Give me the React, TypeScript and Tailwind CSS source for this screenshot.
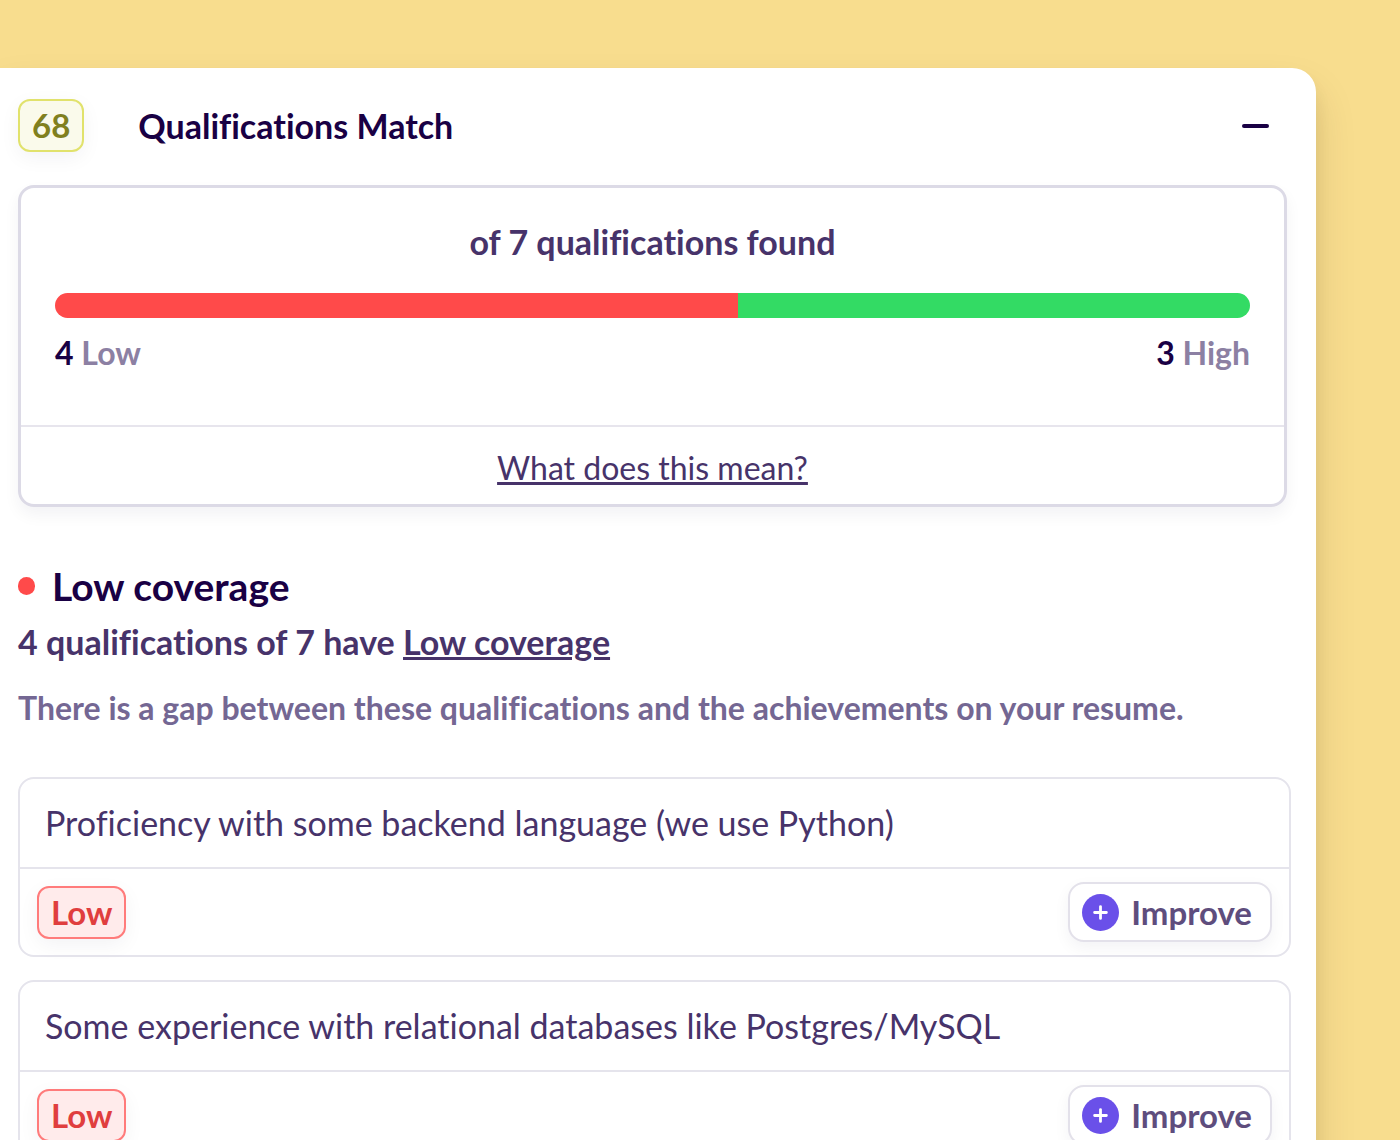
import React, { useState } from "react";

const qualifications = [
  { id: 1, title: "Proficiency with some backend language (we use Python)", level: "Low" },
  { id: 2, title: "Some experience with relational databases like Postgres/MySQL", level: "Low" },
];

const counts = { low: 4, high: 3 };
const total = counts.low + counts.high;

function PlusIcon() {
  return (
    <svg className="h-[37px] w-[37px]" viewBox="0 0 37 37" aria-hidden="true">
      <circle cx="18.5" cy="18.5" r="18.5" fill="#6a50e9" />
      <path d="M18.5 12.6v11.8M12.6 18.5h11.8" stroke="#fff" strokeWidth="2.8" strokeLinecap="round" />
    </svg>
  );
}

function CoverageSummary() {
  return (
    <div className="mr-1 rounded-2xl border-3 border-[#dcdae6] shadow-[0_8px_16px_rgba(25,0,68,0.05)]">
      <div className="px-[34px] pt-[30px] pb-12">
        <p className="text-center text-[34px] leading-12 font-bold text-[#47336a]">
          of {total} qualifications found
        </p>
        <div className="mt-[27px] flex h-[25px] overflow-hidden rounded-full">
          <div className="bg-[#ff4a4a]" style={{ width: `${(counts.low / total) * 100}%` }} />
          <div className="flex-1 bg-[#33db64]" />
        </div>
        <div className="mt-[11px] flex justify-between text-[32px] leading-12 font-bold text-[#8c80a3]">
          <p>
            <span className="text-[#190044]">{counts.low}</span> Low
          </p>
          <p>
            <span className="text-[#190044]">{counts.high}</span> High
          </p>
        </div>
      </div>
      <div className="border-t-2 border-[#e7e5ed] pt-[17px] pb-3 text-center text-[32px] leading-12 text-[#47336a]">
        <a href="#coverage" className="underline">
          What does this mean?
        </a>
      </div>
    </div>
  );
}

function QualificationCard({ title, level }: { title: string; level: string }) {
  return (
    <li className="rounded-2xl border-2 border-[#e5e4ec]">
      <h4 className="border-b-2 border-[#e5e4ec] px-[25px] py-5 text-[34px] leading-12 text-[#47336a]">{title}</h4>
      <div className="flex items-center justify-between px-[17px] py-[13px]">
        <span className="rounded-xl border-2 border-[#ff7b7b] bg-[#ffebeb] px-3 text-[33px] leading-[49px] font-bold text-[#e03e3e] shadow-[0_6px_20px_rgba(25,0,68,0.05)]">
          {level}
        </span>
        <button
          type="button"
          className="flex items-center gap-3 rounded-2xl border-2 border-[#e3e1ea] bg-white py-1 pr-[18px] pl-3 text-[33px] leading-12 font-bold text-[#5e4d7d] shadow-[0_6px_16px_rgba(25,0,68,0.05)]"
        >
          <PlusIcon />
          Improve
        </button>
      </div>
    </li>
  );
}

export default function App() {
  const [open, setOpen] = useState<boolean>(true);

  return (
    <div className="h-screen overflow-hidden bg-[#f8dd8e] pt-[68px] pr-[84px] font-['Lato',sans-serif] [font-variant-ligatures:none]">
      <main className="min-h-full rounded-tr-3xl bg-white pt-[31px] pr-[25px] pb-12 pl-[18px] shadow-[0_24px_40px_rgba(70,50,0,0.15),0_12px_16px_rgba(70,50,0,0.08)]">
        {/* Section header */}
        <header className="flex items-center">
          <span className="rounded-xl border-2 border-[#e1e26c] bg-[#fafaeb] px-3 text-[33px] leading-[49px] font-bold text-[#80801f] shadow-[0_6px_20px_rgba(25,0,68,0.05)]">
            68
          </span>
          <h2 className="ml-[54px] text-[34px] leading-12 font-bold text-[#190044]">Qualifications Match</h2>
          <button
            type="button"
            aria-label="Toggle section"
            aria-expanded={open}
            onClick={() => setOpen(!open)}
            className="mr-4 ml-auto flex h-12 w-10 items-center justify-center"
          >
            <span className="h-1 w-[27px] rounded-full bg-[#190044]" />
          </button>
        </header>

        {open && (
          <div className="mt-[33px]">
            <CoverageSummary />

            {/* Low coverage */}
            <section className="mt-[55px]">
              <h3 className="flex items-center gap-[17px] text-[39px] leading-12 font-bold text-[#190044]">
                <span className="h-[18px] w-[17px] rounded-full bg-[#ff4a4a]" />
                Low coverage
              </h3>
              <p className="mt-2 text-[34px] leading-12 font-bold text-[#47336a]">
                {counts.low} qualifications of {total} have{" "}
                <a href="#low" className="underline">
                  Low coverage
                </a>
              </p>
              <p className="mt-[18px] text-[32px] leading-12 font-bold text-[#746793]">
                There is a gap between these qualifications and the achievements on your resume.
              </p>
              <ul className="mt-[45px] flex flex-col gap-[23px]">
                {qualifications.map((q) => (
                  <QualificationCard key={q.id} title={q.title} level={q.level} />
                ))}
              </ul>
            </section>
          </div>
        )}
      </main>
    </div>
  );
}
